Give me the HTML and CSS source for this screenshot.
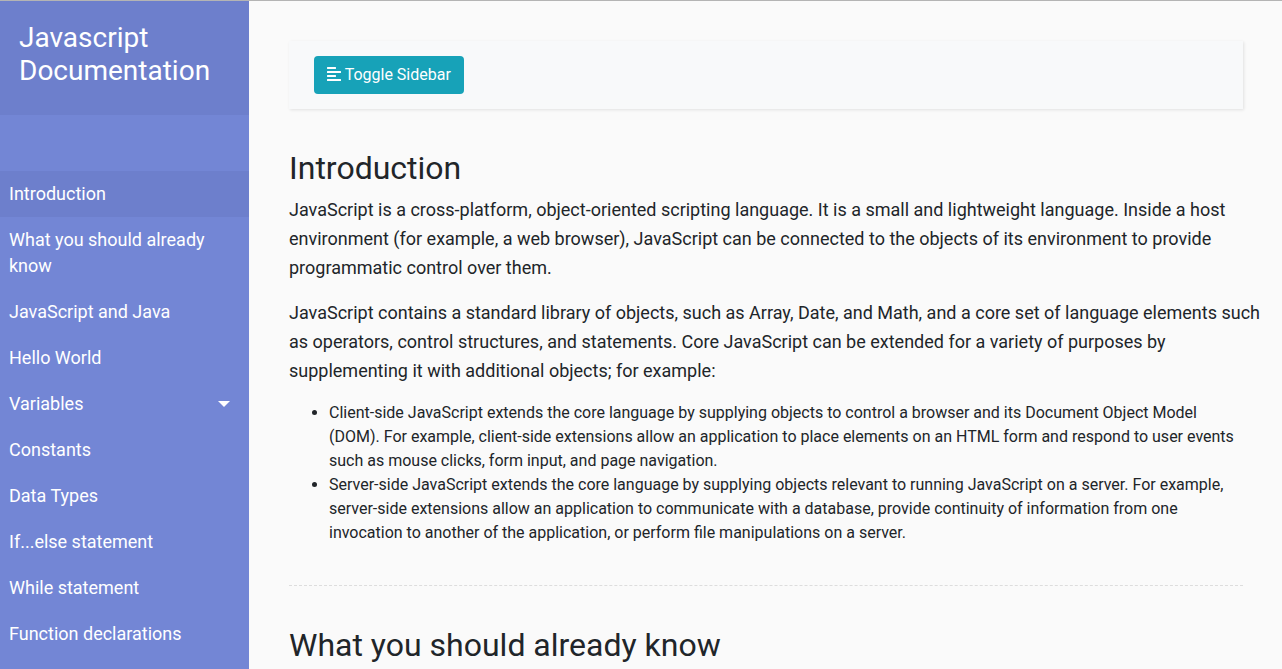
FILE: index.html
```html
<!DOCTYPE html>
<html lang="en">
<head>
<meta charset="utf-8">
<title>Javascript Documentation</title>
<link rel="stylesheet" href="styles.css">
</head>
<body>
<div class="wrapper">
  <nav class="sidebar" aria-label="Documentation">
    <header class="sidebar-header"><h1>Javascript Documentation</h1></header>
    <ul class="menu">
      <li><a class="active" href="#introduction">Introduction</a></li>
      <li><a href="#know">What you should already know</a></li>
      <li><a href="#java">JavaScript and Java</a></li>
      <li><a href="#hello">Hello World</a></li>
      <li><a class="dropdown" href="#variables">Variables</a></li>
      <li><a href="#constants">Constants</a></li>
      <li><a href="#types">Data Types</a></li>
      <li><a href="#if">If...else statement</a></li>
      <li><a href="#while">While statement</a></li>
      <li><a href="#functions">Function declarations</a></li>
    </ul>
  </nav>
  <main class="content">
    <div class="navbar">
      <button class="toggle" type="button">
        <svg class="icon" viewBox="0 0 448 512" aria-hidden="true"><path fill="currentColor" d="M12.83 352h262.34A12.82 12.82 0 0 0 288 339.17v-38.34A12.82 12.82 0 0 0 275.17 288H12.83A12.82 12.82 0 0 0 0 300.83v38.34A12.82 12.82 0 0 0 12.83 352zm0-256h262.34A12.82 12.82 0 0 0 288 83.17V44.83A12.82 12.82 0 0 0 275.17 32H12.83A12.82 12.82 0 0 0 0 44.83v38.34A12.82 12.82 0 0 0 12.83 96zM432 160H16a16 16 0 0 0-16 16v32a16 16 0 0 0 16 16h416a16 16 0 0 0 16-16v-32a16 16 0 0 0-16-16zm0 256H16a16 16 0 0 0-16 16v32a16 16 0 0 0 16 16h416a16 16 0 0 0 16-16v-32a16 16 0 0 0-16-16z"/></svg>
        <span>Toggle Sidebar</span>
      </button>
    </div>
    <section id="introduction">
      <h2>Introduction</h2>
      <p>JavaScript is a cross-platform, object-oriented scripting language. It is a small and lightweight language. Inside a host environment (for example, a web browser), JavaScript can be connected to the objects of its environment to provide programmatic control over them.</p>
      <p>JavaScript contains a standard library of objects, such as Array, Date, and Math, and a core set of language elements such as operators, control structures, and statements. Core JavaScript can be extended for a variety of purposes by supplementing it with additional objects; for example:</p>
      <ul class="examples">
        <li>Client-side JavaScript extends the core language by supplying objects to control a browser and its Document Object Model (DOM). For example, client-side extensions allow an application to place elements on an HTML form and respond to user events such as mouse clicks, form input, and page navigation.</li>
        <li>Server-side JavaScript extends the core language by supplying objects relevant to running JavaScript on a server. For example, server-side extensions allow an application to communicate with a database, provide continuity of information from one invocation to another of the application, or perform file manipulations on a server.</li>
      </ul>
    </section>
    <hr class="line">
    <section id="know">
      <h2>What you should already know</h2>
    </section>
  </main>
</div>
</body>
</html>
```
FILE: styles.css
```css
*, *::before, *::after { box-sizing: border-box; }
body {
  margin: 0;
  font-family: Roboto, sans-serif;
  font-size: 16px;
  line-height: 24px;
  color: #212529;
  background: #fafafa;
}
.wrapper {
  display: flex;
  height: 100vh;
  border-top: 1px solid #b4b4b4;
}
.sidebar {
  flex: 0 0 249px;
  overflow: hidden;
  color: #fff;
  background: #7386d5;
}
.sidebar-header {
  padding: 20px 19px 28px;
  background: #6d7fcc;
}
.sidebar-header h1 {
  margin: 0;
  font-size: 28px;
  font-weight: 400;
  line-height: 33px;
}
.menu {
  margin: 0;
  padding: 56px 0 20px;
  list-style: none;
}
.menu a {
  display: block;
  padding: 10px 9px;
  font-size: 18px;
  line-height: 26px;
  color: #fff;
  text-decoration: none;
}
.menu .active { background: #6d7fcc; }
.menu .dropdown {
  display: flex;
  align-items: center;
  justify-content: space-between;
  padding-right: 19px;
}
.dropdown::after {
  content: "";
  border-top: 6px solid;
  border-right: 6px solid transparent;
  border-left: 6px solid transparent;
}
.content {
  flex: 1;
  min-width: 0;
  padding: 40px 39px 0 40px;
  overflow: hidden;
}
.navbar {
  display: flex;
  margin-bottom: 40px;
  padding: 15px 25px;
  background: #f8f9fa;
  box-shadow: 1px 1px 3px rgba(0, 0, 0, 0.1);
}
.toggle {
  padding: 7px 13px;
  border: 0;
  border-radius: 4px;
  font: inherit;
  color: #fff;
  background: #17a2b8;
}
.icon {
  width: 14px;
  height: 16px;
  vertical-align: -2px;
}
h2 {
  margin: 0 0 8px;
  font-size: 32px;
  font-weight: 400;
  line-height: 38px;
}
/* Body copy runs slightly into the right gutter. */
p {
  margin: 0 -20px 16px 0;
  font-size: 18px;
  line-height: 29px;
}
.examples {
  margin: 0;
  padding-left: 40px;
}
.line {
  height: 0;
  margin: 40px 0;
  border: 0;
  border-top: 1px dashed #ddd;
}
```
